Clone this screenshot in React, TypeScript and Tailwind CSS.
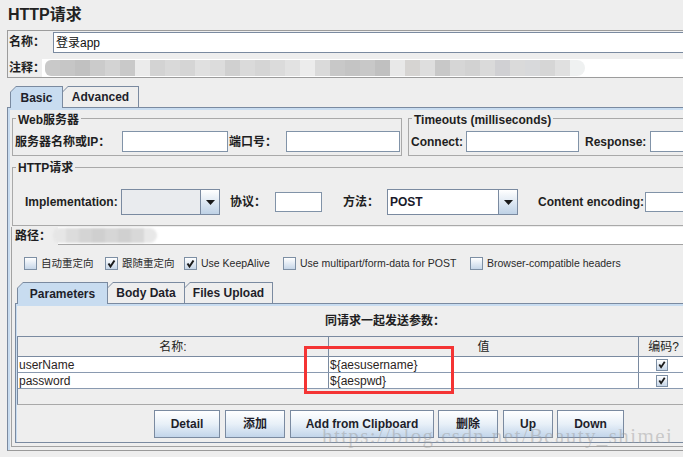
import React from "react";

const FONT = "font-['Liberation_Sans','Noto_Sans_CJK_SC',sans-serif]";

const commentBlocks = [
  "bg-[#c9c9c9] rounded-l-[6px]", "bg-[#c6c6c6]", "bg-[#c1c1c1]", "bg-[#cbcbcb]", "bg-[#d3d3d3]", "bg-[#c9c9c9]",
  "bg-[#ebebeb]", "bg-[#d3d3d3]", "bg-[#d9d9d9]", "bg-[#d5d5d5]", "bg-[#e0e0e0]", "bg-[#dcdcdc]",
  "bg-[#d0d0d0]", "bg-[#dadada]", "bg-[#d5d5d5]", "bg-[#dbdbdb]", "bg-[#e2e2e2]", "bg-[#ececec]",
  "bg-[#dadada]", "bg-[#c8c8c8]", "bg-[#c4c4c4]", "bg-[#c8c8c8]", "bg-[#c0c0c0]", "bg-[#e8e8e8]",
  "bg-[#d6d4d2]", "bg-[#dedede]", "bg-[#c8c8c8]", "bg-[#d6d6d6]", "bg-[#d2d2d2]", "bg-[#dadada]",
  "bg-[#d0d0d3]", "bg-[#dadada]", "bg-[#d8d9db]", "bg-[#d6d6d6]", "bg-[#e0e0e0]", "bg-[#eff1f1] rounded-r-[8px]",
];

const pathBlocks = [
  "bg-[#e6e6e6] rounded-l-[6px]", "bg-[#dcdcdc]", "bg-[#d4d4d4]", "bg-[#cfcfcf]", "bg-[#d6d6d6]",
  "bg-[#d0d0d0]", "bg-[#d8d8d8]", "bg-[#e8e8e8] rounded-r-[10px]",
];

function Tab({ label, w, selected }: { label: string; w: string; selected?: boolean }) {
  return (
    <div
      className={`${w} ${selected ? "relative z-10 h-[22px] -mb-px" : "h-[21px]"} -mr-px shrink-0 bg-[#7a8aa0] pt-px px-px [clip-path:polygon(6px_0,100%_0,100%_100%,0_100%,0_6px)]`}
    >
      <div
        className={`h-full ${selected ? "bg-[#c8dcf0]" : "bg-[#eeeeee]"} flex items-center justify-center text-[12px] font-bold text-[#1e1e2a] [clip-path:polygon(5px_0,100%_0,100%_100%,0_100%,0_5px)]`}
      >
        {label}
      </div>
    </div>
  );
}

function Input({ w, h = "h-[21px]" }: { w: string; h?: string }) {
  return <div className={`${w} ${h} shrink-0 bg-white border border-[#8193a8]`} />;
}

function Triangle() {
  return (
    <svg width="9" height="5" viewBox="0 0 9 5">
      <polygon points="0,0 9,0 4.5,5" fill="#1a1a1a" />
    </svg>
  );
}

function Combo({ w, value, white }: { w: string; value?: string; white?: boolean }) {
  return (
    <div className={`${w} h-[26px] shrink-0 flex border border-[#7a8aa0]`}>
      <div className={`flex-1 flex items-center pl-[2px] text-[12px] font-bold text-[#1a1a2a] ${white ? "bg-white" : "bg-[#e9ebee]"}`}>
        {value}
      </div>
      <div className="w-[19px] border-l border-[#7a8aa0] bg-linear-to-b from-white to-[#bfd2e6] flex items-center justify-center">
        <Triangle />
      </div>
    </div>
  );
}

function Check({ checked, size = "w-[13px] h-[13px]" }: { checked?: boolean; size?: string }) {
  return (
    <div className={`${size} shrink-0 border border-[#7d8fa4] bg-linear-to-b from-white to-[#c6d6e8] flex items-center justify-center`}>
      {checked && (
        <svg width="11" height="11" viewBox="0 0 11 11">
          <path d="M2.5 5.5 L4.5 8.5 L8.5 2.5" stroke="#1a1a1a" strokeWidth="2" fill="none" />
        </svg>
      )}
    </div>
  );
}

function Btn({ label, cls }: { label: string; cls: string }) {
  return (
    <div
      className={`${cls} h-[28px] shrink-0 border border-[#7a8aa0] bg-linear-to-b from-white via-[#e8f0f8] to-[#c2d5ea] flex items-center justify-center text-[12px] font-bold text-[#1e1e2a]`}
    >
      {label}
    </div>
  );
}

export default function App() {
  return (
    <div className={`${FONT} relative w-[683px] h-[457px] overflow-hidden bg-[#eeeeee] text-[#1e1e22]`}>
      {/* Title */}
      <div className="h-[30px] pl-[8px] flex items-center text-[16px] font-bold text-[#222]">HTTP请求</div>

      {/* Name / comment panel */}
      <div className="ml-[7px] w-[760px] h-[48px] border border-[#9c9c9c]">
        <div className="flex h-[22px]">
          <div className="w-[45px] pl-[1px] flex items-center text-[12px] font-bold whitespace-nowrap">名称：</div>
          <div className="mt-px h-[21px] flex-1 bg-white border-l border-t border-b border-[#7a8aa0] flex items-center pl-[2px] text-[12px] text-[#111]">
            登录app
          </div>
        </div>
        <div className="flex items-center h-[24px] pt-[6px]">
          <div className="w-[34px] pl-[1px] text-[12px] font-bold whitespace-nowrap shrink-0">注释：</div>
          <div className="flex-1 h-[18px] bg-white flex items-center pl-[3px]">
            <div className="flex h-[16px] blur-[0.6px]">
              {commentBlocks.map((c, i) => (
                <div key={i} className={`h-full w-[15px] ${c}`} />
              ))}
            </div>
          </div>
        </div>
      </div>

      {/* Basic / Advanced tabs */}
      <div className="mt-[8px] pl-[10px] flex">
        <Tab label="Basic" w="w-[53px]" selected />
        <Tab label="Advanced" w="w-[77px]" />
      </div>

      {/* Main panel */}
      <div className="ml-[7px] w-[800px] border-t border-l border-b border-[#7a8aa0] border-b-[#9a9a9a]">
        <div className="border-t-2 border-l-2 border-[#c8dcf0] pb-[3px]">
          {/* Web server + timeouts */}
          <div className="flex mt-px">
            <fieldset className="ml-[2px] w-[390px] min-w-0 shrink-0 border border-[#a9a9a9] pb-[3px]">
              <legend className="ml-[3px] px-[2px] text-[12px] font-bold leading-[14px]">
                <span className="relative top-[2px]">Web服务器</span>
              </legend>
              <div className="mt-[6px] flex items-center h-[21px]">
                <div className="w-[109px] pl-[2px] text-[12px] font-bold shrink-0">服务器名称或IP：</div>
                <Input w="w-[106px]" />
                <div className="ml-px w-[57px] text-[12px] font-bold shrink-0">端口号：</div>
                <Input w="w-[114px]" />
              </div>
            </fieldset>
            <fieldset className="ml-[6px] w-[320px] min-w-0 shrink-0 border border-[#a9a9a9] pb-[3px]">
              <legend className="ml-[3px] px-[2px] text-[12px] font-bold leading-[14px]">
                <span className="relative top-[2px]">Timeouts (milliseconds)</span>
              </legend>
              <div className="mt-[6px] flex items-center h-[21px]">
                <div className="w-[57px] pl-[2px] text-[12px] font-bold shrink-0">Connect:</div>
                <Input w="w-[113px]" />
                <div className="ml-[6px] w-[65px] text-[12px] font-bold shrink-0">Response:</div>
                <Input w="w-[100px]" />
              </div>
            </fieldset>
          </div>

          {/* HTTP request fieldset */}
          <fieldset className="ml-[2px] mt-[4px] w-[780px] min-w-0 border border-[#a9a9a9] pb-[10px]">
            <legend className="ml-[3px] px-[2px] text-[12px] font-bold leading-[14px]">
              <span className="relative top-[1px]">HTTP请求</span>
            </legend>
            <div className="mt-[15px] flex items-center h-[26px]">
              <div className="w-[108px] pl-[12px] text-[12px] font-bold shrink-0">Implementation:</div>
              <Combo w="w-[99px]" />
              <div className="ml-[10px] w-[45px] text-[12px] font-bold shrink-0">协议：</div>
              <Input w="w-[47px]" h="h-[20px]" />
              <div className="ml-[21px] w-[44px] text-[12px] font-bold shrink-0">方法：</div>
              <Combo w="w-[131px]" value="POST" white />
              <div className="ml-[20px] w-[107px] text-[12px] font-bold shrink-0">Content encoding:</div>
              <Input w="w-[60px]" h="h-[20px]" />
            </div>
          </fieldset>

          {/* Lower box */}
          <div className="ml-px w-[790px] border-l border-b border-[#a2a2a2] pb-[3px]">
            {/* path */}
            <div className="mt-px h-[18px] flex items-center">
              <div className="w-[46px] pl-[3px] text-[12px] font-bold shrink-0">路径：</div>
              <div className="flex-1 h-[18px] bg-white border-b border-[#a2a2a2] flex items-center">
                <div className="-ml-[5px] flex h-[15px] blur-[0.8px]">
                  {pathBlocks.map((c, i) => (
                    <div key={i} className={`h-full w-[13px] ${c}`} />
                  ))}
                </div>
              </div>
            </div>

            {/* checkboxes */}
            <div className="mt-[12px] h-[13px] pl-[12px] flex items-center text-[10.5px] text-[#2a2a2a]">
              <div className="w-[81px] shrink-0 flex items-center gap-[4px]">
                <Check />
                <span>自动重定向</span>
              </div>
              <div className="w-[79px] shrink-0 flex items-center gap-[4px]">
                <Check checked />
                <span>跟随重定向</span>
              </div>
              <div className="w-[99px] shrink-0 flex items-center gap-[4px]">
                <Check checked />
                <span>Use KeepAlive</span>
              </div>
              <div className="w-[187px] shrink-0 flex items-center gap-[4px]">
                <Check />
                <span>Use multipart/form-data for POST</span>
              </div>
              <div className="shrink-0 flex items-center gap-[4px]">
                <Check />
                <span>Browser-compatible headers</span>
              </div>
            </div>

            {/* parameter tabs */}
            <div className="mt-[12px] pl-[5px] flex">
              <Tab label="Parameters" w="w-[91px]" selected />
              <Tab label="Body Data" w="w-[78px]" />
              <Tab label="Files Upload" w="w-[89px]" />
            </div>

            {/* tab panel */}
            <div className="ml-[3px] w-[770px] border-t border-l border-b border-[#7a8aa0]">
              <div className="border-t-2 border-l border-[#c8dcf0] pb-[4px]">
                <div className="h-[30px] pl-[308px] flex items-center text-[12px] font-bold">同请求一起发送参数：</div>

                {/* table */}
                <div className="w-[720px] border-l border-t border-b border-[#7a8aa0] border-b-[#a8a8a8] text-[12px]">
                  <div className="flex h-[20px] border-b border-[#7a8aa0] bg-[#eeeeee]">
                    <div className="w-[311px] shrink-0 border-r border-[#7a8aa0] flex items-center justify-center">名称:</div>
                    <div className="w-[310px] shrink-0 border-r border-[#7a8aa0] flex items-center justify-center">值</div>
                    <div className="w-[50px] shrink-0 border-r border-[#7a8aa0] flex items-center justify-center">编码?</div>
                  </div>
                  {[
                    ["userName", "${aesusername}"],
                    ["password", "${aespwd}"],
                  ].map(([k, v]) => (
                    <div key={k} className="flex h-[16px] border-b border-[#8a9ab0] bg-white">
                      <div className="w-[311px] shrink-0 border-r border-[#7a8aa0] flex items-center pl-px leading-[14px] text-[#2a1e22]">{k}</div>
                      <div className="w-[310px] shrink-0 border-r border-[#7a8aa0] flex items-center pl-px leading-[14px] text-[#2a1e22]">{v}</div>
                      <div className="w-[50px] shrink-0 border-r border-[#7a8aa0] flex items-center justify-center pr-[3px]">
                        <Check checked size="w-[12px] h-[12px]" />
                      </div>
                    </div>
                  ))}
                  <div className="h-[15px]" />
                </div>

                {/* buttons */}
                <div className="mt-[5px] h-[28px] flex pl-[137px]">
                  <Btn label="Detail" cls="w-[66px]" />
                  <Btn label="添加" cls="ml-[5px] w-[60px]" />
                  <Btn label="Add from Clipboard" cls="ml-[5px] w-[144px]" />
                  <Btn label="删除" cls="ml-[4px] w-[60px]" />
                  <Btn label="Up" cls="ml-[5px] w-[50px]" />
                  <Btn label="Down" cls="ml-[4px] w-[67px]" />
                </div>
              </div>
            </div>
          </div>
        </div>
      </div>

      {/* red annotation box */}
      <div className="absolute left-[304px] top-[346px] w-[150px] h-[48px] border-[3px] border-[#f43434]" />

      {/* watermark */}
      <div className="absolute left-[322px] top-[424px] font-['Liberation_Serif',serif] text-[21px] leading-[24px] tracking-[1.4px] text-[#9a9a9a]/45 whitespace-nowrap pointer-events-none">
        https://blog.csdn.net/Beauty_shimei
      </div>
    </div>
  );
}
